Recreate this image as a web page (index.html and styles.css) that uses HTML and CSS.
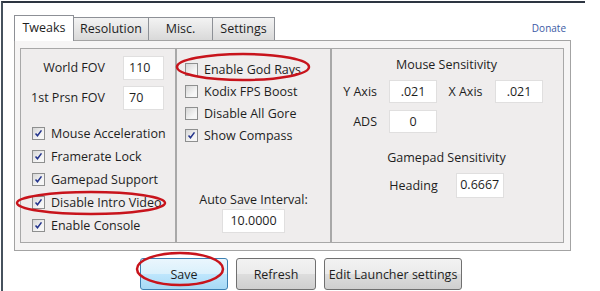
FILE: index.html
```html
<!DOCTYPE html>
<html lang="en">
<head>
    <meta charset="UTF-8">
    <title>Tweaks</title>
    <link rel="stylesheet" href="styles.css">
</head>
<body>
<div class="window">
    <div class="tabbar">
        <div class="tab active">Tweaks</div>
        <div class="tab">Resolution</div>
        <div class="tab">Misc.</div>
        <div class="tab">Settings</div>
        <a class="donate" href="#">Donate</a>
    </div>

    <div class="panel">
        <div class="group g1">
            <div class="fov-row">
                <span class="fov-label">World FOV</span>
                <span class="field fov">110</span>
            </div>
            <div class="fov-row">
                <span class="fov-label">1st Prsn FOV</span>
                <span class="field fov">70</span>
            </div>
            <div class="checks checks-1">
                <label class="check"><span class="box on"><svg viewBox="0 0 13 13"><path d="M3 6.5 L5.3 9.2 L10 2.8"/></svg></span>Mouse Acceleration</label>
                <label class="check"><span class="box on"><svg viewBox="0 0 13 13"><path d="M3 6.5 L5.3 9.2 L10 2.8"/></svg></span>Framerate Lock</label>
                <label class="check"><span class="box on"><svg viewBox="0 0 13 13"><path d="M3 6.5 L5.3 9.2 L10 2.8"/></svg></span>Gamepad Support</label>
                <label class="check"><span class="box on"><svg viewBox="0 0 13 13"><path d="M3 6.5 L5.3 9.2 L10 2.8"/></svg></span>Disable Intro Video</label>
                <label class="check"><span class="box on"><svg viewBox="0 0 13 13"><path d="M3 6.5 L5.3 9.2 L10 2.8"/></svg></span>Enable Console</label>
            </div>
        </div>

        <div class="group g2">
            <div class="checks checks-2">
                <label class="check"><span class="box"></span>Enable God Rays</label>
                <label class="check"><span class="box"></span>Kodix FPS Boost</label>
                <label class="check"><span class="box"></span>Disable All Gore</label>
                <label class="check"><span class="box on"><svg viewBox="0 0 13 13"><path d="M3 6.5 L5.3 9.2 L10 2.8"/></svg></span>Show Compass</label>
            </div>
            <div class="autosave">
                <div>Auto Save Interval:</div>
                <span class="field wide">10.0000</span>
            </div>
        </div>

        <div class="group g3">
            <div class="heading">Mouse Sensitivity</div>
            <div class="sens">
                <span class="sens-label">Y Axis</span>
                <span class="field small">.021</span>
                <span class="sens-label x">X Axis</span>
                <span class="field small">.021</span>
                <span class="sens-label">ADS</span>
                <span class="field small">0</span>
            </div>
            <div class="heading pad">Gamepad Sensitivity</div>
            <div class="pad-row">
                <span>Heading</span>
                <span class="field small">0.6667</span>
            </div>
        </div>
    </div>

    <div class="buttons">
        <button class="btn save">Save</button>
        <button class="btn refresh">Refresh</button>
        <button class="btn edit">Edit Launcher settings</button>
    </div>
</div>

<svg class="marks" width="600" height="291" viewBox="0 0 600 291">
    <ellipse cx="243" cy="67" rx="66" ry="13"/>
    <ellipse cx="91" cy="203" rx="74" ry="11"/>
    <ellipse cx="180" cy="269" rx="43" ry="16"/>
</svg>
</body>
</html>
```

FILE: styles.css
```css
* {
    box-sizing: border-box;
}

body {
    margin: 0;
    background: #ffffff;
    font-family: 'Open Sans', 'Noto Sans', sans-serif;
    font-size: 12.5px;
    color: #1e1e1e;
    position: relative;
    width: 600px;
    height: 291px;
    overflow: hidden;
}

.window {
    width: 584px;
    height: 290px;
    margin: 1px 0 0 1px;
    border-top: 2px solid #2d3541;
    border-left: 2px solid #46515d;
    padding: 12px 0 0 11px;
}

/* tabs */
.tabbar {
    display: flex;
    align-items: flex-end;
    width: 556px;
    height: 25px;
}

.tab {
    height: 23px;
    line-height: 21px;
    text-align: center;
    border: 1px solid #8d9096;
    border-bottom: none;
    margin-left: -1px;
    background: linear-gradient(#f3f3f3, #e6e6e6 50%, #d9d9d9);
}

.tab:nth-child(1) { width: 60px; margin-left: 0; }
.tab:nth-child(2) { width: 76px; }
.tab:nth-child(3) { width: 65px; }
.tab:nth-child(4) { width: 63px; }

.tab.active {
    height: 26px;
    line-height: 24px;
    background: #ffffff;
    margin-bottom: -1px;
    position: relative;
    z-index: 1;
}

.donate {
    margin-left: auto;
    margin-right: 4px;
    align-self: center;
    font-size: 10px;
    color: #3c5aa5;
    text-decoration: none;
    padding-top: 1px;
}

/* tab content */
.panel {
    display: flex;
    width: 557px;
    height: 211px;
    border: 1px solid #a3a3a3;
    background: #f6f5f5;
    padding: 7px 6px 6px 5px;
}

.group {
    border: 1px solid #a8a8a8;
    background: #efeded;
    height: 195px;
}

.g1 {
    width: 156px;
    padding: 6px 0 0 0;
}

.g2 {
    width: 155px;
    display: flex;
    flex-direction: column;
    padding: 9px 0 9px 8px;
}

.g3 {
    flex: 1;
    padding-top: 7px;
}

.fov-row {
    display: flex;
    align-items: center;
    height: 25px;
    margin-bottom: 5px;
}

.fov-label {
    width: 84px;
    text-align: right;
}

.field {
    display: inline-block;
    background: #ffffff;
    border: 1px solid #e0dfdf;
    height: 24px;
    line-height: 22px;
    text-align: center;
}

.fov {
    width: 41px;
    margin-left: 18px;
    text-align: left;
    padding-left: 5px;
}

.checks {
    display: flex;
    flex-direction: column;
}

.checks-1 {
    margin-top: 12px;
    padding-left: 11px;
}

.check {
    display: flex;
    align-items: center;
    gap: 6px;
    height: 23px;
    white-space: nowrap;
}

.checks-2 .check {
    height: 22px;
}

.box {
    width: 13px;
    height: 13px;
    border: 1px solid #8e8f8f;
    background: linear-gradient(135deg, #d6d6d6, #f6f6f6 70%);
    flex: none;
}

.box svg {
    display: block;
    width: 11px;
    height: 11px;
}

.box path {
    fill: none;
    stroke: #23338c;
    stroke-width: 1.8;
}

.autosave {
    margin-top: auto;
    display: flex;
    flex-direction: column;
    align-items: center;
    padding-right: 8px;
    gap: 1px;
}

.wide {
    width: 63px;
}

.heading {
    text-align: center;
    height: 18px;
    padding-right: 2px;
}

.sens {
    display: grid;
    grid-template-columns: 45px 47px 35px 47px;
    column-gap: 12px;
    row-gap: 7px;
    align-items: center;
    margin-top: 6px;
}

.sens .field {
    height: 23px;
    line-height: 21px;
}

.sens-label {
    text-align: right;
}

.sens-label.x {
    margin-left: -4px;
    margin-right: -4px;
    text-align: center;
}

.pad {
    margin-top: 16px;
}

.pad-row {
    display: flex;
    align-items: center;
    justify-content: center;
    gap: 18px;
    margin-top: 6px;
    padding-right: 2px;
}

.small {
    width: 48px;
}

.pad-row .field {
    height: 25px;
}

/* bottom buttons */
.buttons {
    display: flex;
    gap: 8px;
    margin: 7px 0 0 126px;
}

.btn {
    height: 32px;
    font-family: inherit;
    font-size: 12.5px;
    color: #1e1e1e;
    border: 1px solid #707070;
    border-radius: 3px;
    background: linear-gradient(#f2f2f2, #ebebeb 50%, #dddddd 51%, #cfcfcf);
    padding: 0;
}

.save {
    width: 88px;
    border-color: #3c7fb1;
    background: linear-gradient(#eaf6fd, #d9f0fc 50%, #bee6fd 51%, #a7d9f5);
}

.refresh {
    width: 80px;
}

.edit {
    width: 138px;
}

/* red annotation rings */
.marks {
    position: absolute;
    left: 0;
    top: 0;
    pointer-events: none;
}

.marks ellipse {
    fill: none;
    stroke: #c8141c;
    stroke-width: 2.5;
}
```
